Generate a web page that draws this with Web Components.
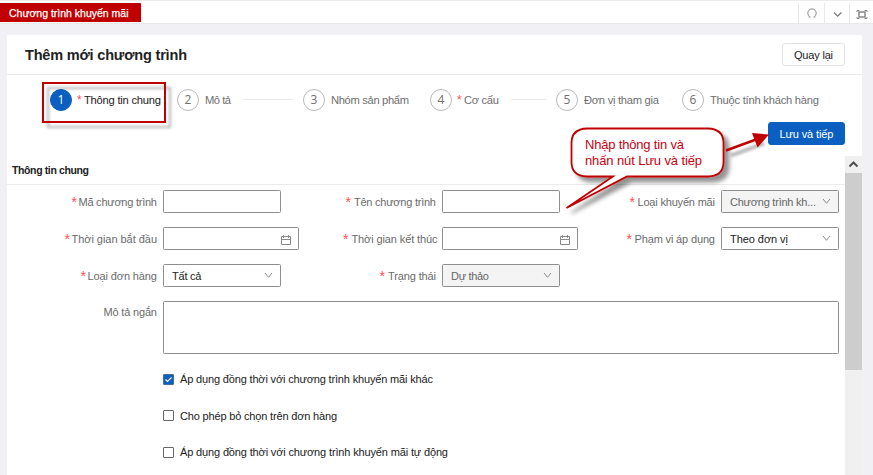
<!DOCTYPE html>
<html lang="vi"><head><meta charset="utf-8"><title>Chương trình khuyến mãi</title>
<style>
html,body{margin:0;width:873px;height:475px;overflow:hidden;background:#f0f0f5;font-family:"Liberation Sans",Arial,sans-serif;font-size:11px;color:#222}
</style></head><body>
<promo-page></promo-page>
<script>
const define=(name,html,setup)=>customElements.define(name,class extends HTMLElement{
  connectedCallback(){
    if(this.shadowRoot)return;
    const t=document.createElement('template');
    t.innerHTML=typeof html==='function'?html(this):html;
    this.attachShadow({mode:'open'}).append(t.content.cloneNode(true));
    if(setup)setup(this,this.shadowRoot);
  }
});
const attr=(el,n,d='')=>el.getAttribute(n)||d;

/* Single line of text tracked to a fixed width */
define('fit-text',`<style>:host{display:inline-block;white-space:nowrap;line-height:16px}span{display:inline-block}</style><span><slot></slot></span>`,(el,root)=>{
  const w=parseFloat(attr(el,'w')),s=root.querySelector('span');
  if(!w)return;
  const n=[...el.textContent].length;
  s.style.letterSpacing=((w-s.getBoundingClientRect().width)/(n-1))+'px';
  el.style.width=w+'px';
});

define('tab-bar',`<style>
:host{display:flex;box-sizing:border-box;height:24px;background:#fff;border-top:1px solid #ececef;border-bottom:1px solid #e8e8eb;justify-content:space-between}
.tab{box-sizing:border-box;width:141px;height:19px;margin-top:2px;padding-left:9px;background:#c00000;color:#fff;display:flex;align-items:center;border-radius:0 1px 0 0}
.tools{display:flex;width:75px;padding-top:2px;height:20px}
.tools div{box-sizing:border-box;width:25.5px;border-left:1px solid #e8e8e8;flex:none;display:flex}
svg{display:block}
</style><div class="tab"><fit-text w="119.5" style="font-size:10.500px;-webkit-text-stroke:.25px #fff">Chương trình khuyến mãi</fit-text></div>
<div class="tools">
<div><svg width="25" height="19" fill="none" stroke="#888"><path d="M11.500 14H9.500M14.500 14h2M10.500 13.500A4.200 4.200 0 1 1 15.500 13.500"/></svg></div>
<div><svg width="25" height="19" fill="none" stroke="#777" stroke-width="1.200"><path d="M9 9.500l3.700 3.700L16.400 9.500"/></svg></div>
<div><svg width="25" height="19" fill="none" stroke="#888"><rect x="9" y="9" width="6" height="5" stroke-width="1.500"/><path d="M7 9V7.500H9.500M14.500 7.500H17V9M7 14V15.500H9.500M14.500 15.500H17V14"/></svg></div>
</div>`);

define('ui-button',`<style>
:host{display:flex;box-sizing:border-box;align-items:center;justify-content:center;width:63px;height:23px;border:1px solid #e4e4e4;border-radius:3px;background:#fff;color:#222}
:host([primary]){width:77px;background:#0a5fc0;border-color:#0a5fc0;color:#fff}
</style><slot></slot>`);

define('step-item',el=>`<style>
:host{display:flex;align-items:center;height:23px;color:#6f6f6f;font-size:11.200px}
.n{box-sizing:border-box;width:22px;height:22px;flex:none;border:1px solid #b9b9b9;border-radius:50%;display:flex;align-items:center;justify-content:center;font:12px/20px "Open Sans","Noto Sans",sans-serif;margin-right:6px}
:host([req]) .n{margin-right:5px}
:host([active]){color:#222}:host([active]) .n{background:#0a5fc0;border-color:#0a5fc0;color:#fff}
.r{color:#ff4d4f;width:6px;font-size:12px;line-height:12px;height:12px;margin-right:1px}
.l{height:1px;background:#e8e8e8;flex:1}
.l.a{margin-left:12px;margin-right:10.500px}
.l.dot{flex:none;width:1px;margin-left:11px}
</style><div class="n">${attr(el,'n')}</div>${el.hasAttribute('req')?'<span class="r">*</span>':''}<slot></slot>${el.hasAttribute('line')?'<div class="l a"></div>':el.hasAttribute('dot')?'<div class="l dot"></div>':''}`);

define('form-field',el=>{
  const k=attr(el,'kind'),cal='<svg width="10" height="10" fill="none" stroke="#8a8a8a"><path d="M.500 1.500H9.500V9.500H.500ZM.500 4.500H9.500M2.500 0V3M7.500 0V3"/></svg>',
  arr='<svg width="9" height="7" fill="none" stroke="#8c8c8c"><path d="M1 1l3.500 4.300L8 1"/></svg>';
  return `<style>
:host{display:flex;min-width:0;color:#6b6b6b}
label{flex:none;box-sizing:border-box;width:var(--lw,143px);padding-right:${attr(el,'gap','6')}px;height:23px;display:flex;align-items:center;justify-content:flex-end}
:host([kind=area]) label{height:21px}
.r{color:#ff4d4f;font-size:14px;line-height:14px;height:14px;margin-right:${attr(el,'rg','1.5')}px}
.c{box-sizing:border-box;width:118px;height:23px;border:1px solid #8e8e8e;border-radius:1.500px;display:flex;align-items:center;justify-content:space-between;padding:0 7px 0 8px;color:#222;background:#fff}
.c.date{width:136px;justify-content:flex-end}
.c.area{width:676px;height:53px}
.date svg{margin-top:2px}
:host([disabled]) .c{background:#f4f4f4;color:#666}
</style><label>${el.hasAttribute('req')?'<span class="r">*</span>':''}<fit-text w="${attr(el,'w')}">${attr(el,'label')}</fit-text></label>
<div class="c ${k}"><slot></slot>${k==='date'?cal:k==='select'?arr:''}</div>`});

define('check-line',el=>`<style>
:host{display:flex;align-items:center;height:16px;gap:6px;color:#222}
i{box-sizing:border-box;width:11px;height:11px;border:1px solid #666;border-radius:1px;display:block}
:host([checked]) i{background:#0a5fc0;border-color:#4c6d97}
svg{display:block}
</style><i>${el.hasAttribute('checked')?'<svg width="9" height="9" fill="none" stroke="#fff" stroke-width="1.200"><path d="M1.500 4.500l2 2 4-4"/></svg>':''}</i><slot></slot>`);

define('scroll-bar',`<style>
:host{display:block;width:17px;background:#f0f0f0}
div{height:197px;background:#cdcdcd}svg{display:block}
</style><svg width="17" height="17" fill="none" stroke="#505050" stroke-width="2"><path d="M4.500 10.500L8.500 6.500L12.500 10.500"/></svg><div></div>`);

define('promo-form',`<style>
:host{display:block;width:838px}
h2{margin:0;font-size:10.500px;height:29px;border-bottom:1px solid #ebebeb;padding-left:5px;display:flex;align-items:center;box-sizing:border-box}
.g{display:grid;grid-template-columns:292px 279px 261px;row-gap:14px;padding-top:5px}
.g>:nth-child(3n+1){--lw:156px}
.w{grid-column:1/-1}
.k{padding:17px 0 0 156px;display:flex;flex-direction:column;gap:20.500px}
</style><h2><fit-text w="77">Thông tin chung</fit-text></h2>
<div class="g">
<form-field req w="78.500" label="Mã chương trình"></form-field>
<form-field req rg="3" w="82" label="Tên chương trình"></form-field>
<form-field req disabled rg="2.500" kind="select" w="77.500" label="Loại khuyến mãi"><fit-text w="86">Chương trình kh...</fit-text></form-field>
<form-field req kind="date" w="85.500" label="Thời gian bắt đầu"></form-field>
<form-field req rg="3" gap="4.500" kind="date" w="86" label="Thời gian kết thúc"></form-field>
<form-field req rg="2.500" kind="select" w="80.500" label="Phạm vi áp dụng"><fit-text w="58">Theo đơn vị</fit-text></form-field>
<form-field req kind="select" w="69.500" label="Loại đơn hàng"><fit-text w="29.500">Tất cả</fit-text></form-field>
<form-field req disabled rg="3" kind="select" w="48" label="Trạng thái"><fit-text w="38">Dự thảo</fit-text></form-field>
<span></span>
<form-field class="w" kind="area" w="53.500" label="Mô tả ngắn"></form-field>
</div>
<div class="k"><check-line checked><fit-text w="253">Áp dụng đồng thời với chương trình khuyến mãi khác</fit-text></check-line>
<check-line><fit-text w="157">Cho phép bỏ chọn trên đơn hàng</fit-text></check-line>
<check-line><fit-text w="268">Áp dụng đồng thời với chương trình khuyến mãi tự động</fit-text></check-line></div>`);

/* Red annotations drawn over the page */
define('guide-notes',`<style>
:host{position:absolute;inset:0;pointer-events:none}
svg{position:absolute;inset:0}
.t{position:absolute;left:585px;top:137px;color:#cc0010;font-size:13px;display:flex;flex-direction:column}
</style><svg width="873" height="475" fill="none" stroke="#c00000">
<defs><filter id="s" x="-20%" y="-30%" width="150%" height="180%"><feDropShadow dx="5" dy="5" stdDeviation="2" flood-color="#000" flood-opacity=".42"/></filter>
<filter id="b" x="-20%" y="-40%" width="150%" height="190%"><feDropShadow dx="5" dy="5" stdDeviation="1.700" flood-color="#000" flood-opacity=".3"/></filter></defs>
<rect x="43" y="83" width="122" height="39" stroke-width="2" filter="url(#b)"/>
<path filter="url(#s)" fill="#fff" stroke-width="1.800" d="M587 128.500H708Q723.500 129 723.500 143V162Q723.500 176 708 176.500H627L566.500 208L613 176.500H587Q571.500 176 571.500 162V143Q571.500 129 587 128.500Z"/>
<path stroke="#000" stroke-opacity=".25" stroke-width="4" style="filter:blur(1.200px)" d="M731 155.500L764 143.500"/>
<path stroke-width="2.400" d="M726 150.500L756 139.500"/><path fill="#c00000" stroke="none" d="M769 134.500L752 133L757.500 147.500Z"/></svg>
<div class="t"><fit-text w="99">Nhập thông tin và</fit-text><fit-text w="117">nhấn nút Lưu và tiếp</fit-text></div>`);

define('promo-page',`<style>
:host{display:block;position:relative;width:873px;height:475px;overflow:hidden}
main{margin:11px 11px 0 7px;background:#fff;height:440px;display:flex;flex-direction:column}
header{box-sizing:border-box;height:40px;border-bottom:1px solid #ebebeb;padding:0 17px 0 18px;display:flex;align-items:center;justify-content:space-between;flex:none}
h1{margin:0;font-size:14.500px}
.steps{display:flex;padding:13px 0 0 43px;height:23px;flex:none}
.act{display:flex;justify-content:flex-end;padding:11px 17px 0 0;flex:none}
.body{display:flex;flex:1;margin-top:11px;min-height:0}
</style><tab-bar></tab-bar>
<main><header><h1><fit-text w="162">Thêm mới chương trình</fit-text></h1><ui-button><fit-text w="39">Quay lại</fit-text></ui-button></header>
<div class="steps">
<step-item n="1" active req style="width:127px"><fit-text w="77">Thông tin chung</fit-text></step-item>
<step-item n="2" line style="width:126px"><fit-text w="26">Mô tả</fit-text></step-item>
<step-item n="3" style="width:127px"><fit-text w="78">Nhóm sản phẩm</fit-text></step-item>
<step-item n="4" req line style="width:126px"><fit-text w="35">Cơ cấu</fit-text></step-item>
<step-item n="5" dot style="width:126px"><fit-text w="75">Đơn vị tham gia</fit-text></step-item>
<step-item n="6"><fit-text w="109">Thuộc tính khách hàng</fit-text></step-item>
</div>
<div class="act"><ui-button primary><fit-text w="54">Lưu và tiếp</fit-text></ui-button></div>
<div class="body"><promo-form></promo-form><scroll-bar></scroll-bar></div></main>
<guide-notes></guide-notes>`);
</script></body></html>
